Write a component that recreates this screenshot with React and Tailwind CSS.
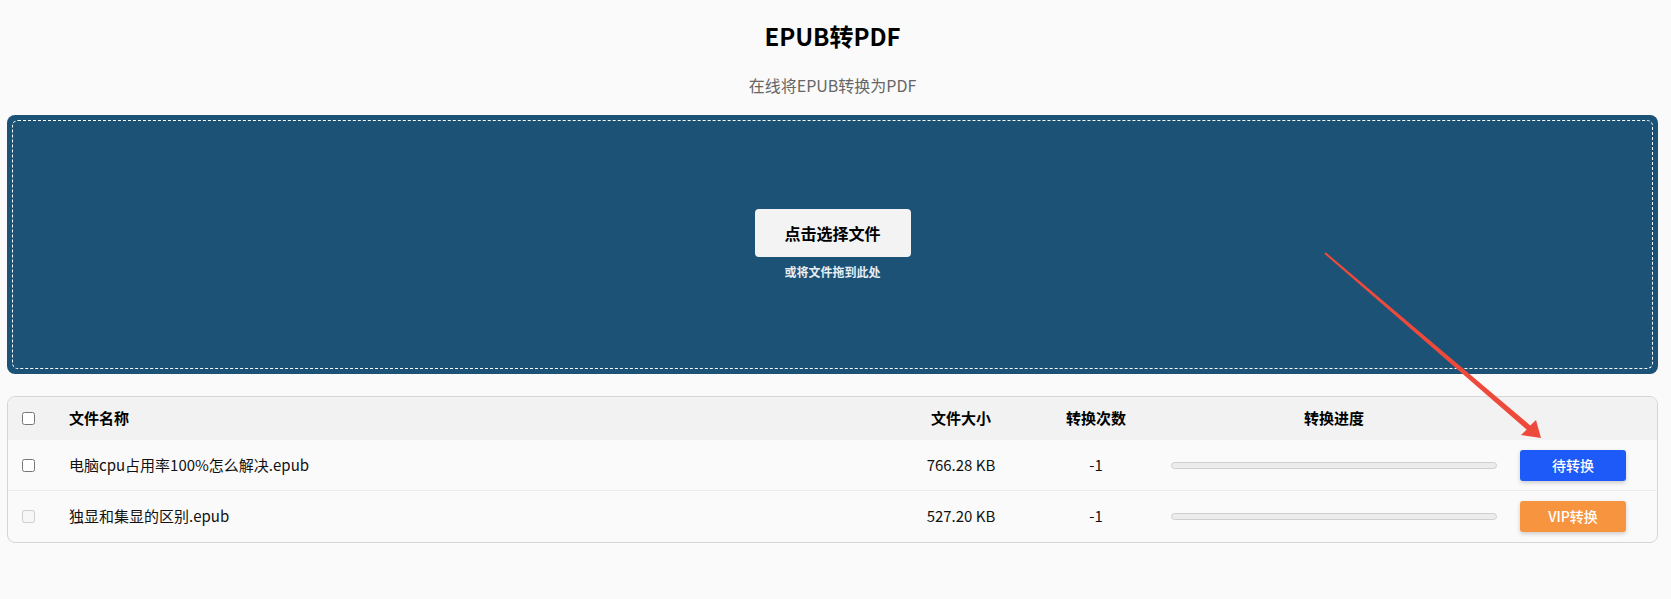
import React from "react";

const files = [
  { id: 1, name: "电脑cpu占用率100%怎么解决.epub", size: "766.28 KB", count: "-1", action: "待转换", vip: false },
  { id: 2, name: "独显和集显的区别.epub", size: "527.20 KB", count: "-1", action: "VIP转换", vip: true },
];

const cols = "grid grid-cols-[61px_1fr_140px_130px_346px_150px] items-center";

export default function App() {
  return (
    <div
      className="relative min-h-[599px] bg-[#fafafa] pt-5 pl-[7px] pr-[13px]"
      style={{ fontFamily: '"Noto Sans CJK SC", "Noto Sans", sans-serif' }}>
      <h1 className="text-center text-[24px] leading-[32px] font-bold text-black">
        EPUB转PDF
      </h1>
      <p className="mt-[21px] text-center text-[16px] leading-6 text-[#666]">
        在线将EPUB转换为PDF
      </p>

      {/* upload area */}
      <div className="mt-[18px] h-[259px] rounded-lg bg-[#1b5276] p-[5px]">
        <div className="flex h-full flex-col items-center justify-center rounded-md border border-dashed border-white">
          <button className="h-12 w-[156px] rounded bg-[#f3f3f3] text-[16px] font-bold text-black">
            点击选择文件
          </button>
          <span className="mt-[7px] text-[12px] leading-4 font-semibold text-[#e8eef3]">
            或将文件拖到此处
          </span>
        </div>
      </div>

      {/* file list */}
      <div className="mt-[22px] overflow-hidden rounded-lg border border-[#d6d6d6] bg-[#fafafa]">
        <div className={`${cols} h-[43px] bg-[#f2f2f2] text-[15px] font-bold text-black`}>
          <div className="pl-[14px] flex items-center">
            <input type="checkbox" className="m-0 h-[13px] w-[13px]" />
          </div>
          <div>文件名称</div>
          <div className="text-center">文件大小</div>
          <div className="text-center">转换次数</div>
          <div className="text-center">转换进度</div>
          <div />
        </div>
        {files.map((f, i) => (
          <div
            key={f.id}
            className={`${cols} h-[51px] text-[15px] text-[#111] ${
              i === 0 ? "border-b border-[#ececec]" : ""
            }`}>
            <div className="pl-[14px] flex items-center">
              <input type="checkbox" disabled={f.vip} className="m-0 h-[13px] w-[13px]" />
            </div>
            <div>{f.name}</div>
            <div className="text-center">{f.size}</div>
            <div className="text-center">{f.count}</div>
            <div className="px-[10px]">
              <div className="h-[7px] w-full rounded-full border border-[#cfcfcf] bg-[#ececec]" />
            </div>
            <div className="pl-[13px]">
              <button
                className={`h-[31px] w-[106px] rounded-[3px] text-[14px] font-medium text-white shadow-[0_2px_4px_rgba(0,0,0,0.18)] ${
                  f.vip ? "bg-[#f7943f]" : "bg-[#1e5af7]"
                }`}>
                {f.action}
              </button>
            </div>
          </div>
        ))}
      </div>

      {/* annotation arrow */}
      <svg
        className="pointer-events-none absolute left-0 top-0"
        width="1671"
        height="599"
        viewBox="0 0 1671 599">
        <path
          d="M1324.3 253.7 L1325.7 252.3 L1530.3 425.4 L1536 420 L1541 438 L1521 435 L1526.7 429.6 Z"
          fill="#ee4a3c"
        />
      </svg>
    </div>
  );
}
